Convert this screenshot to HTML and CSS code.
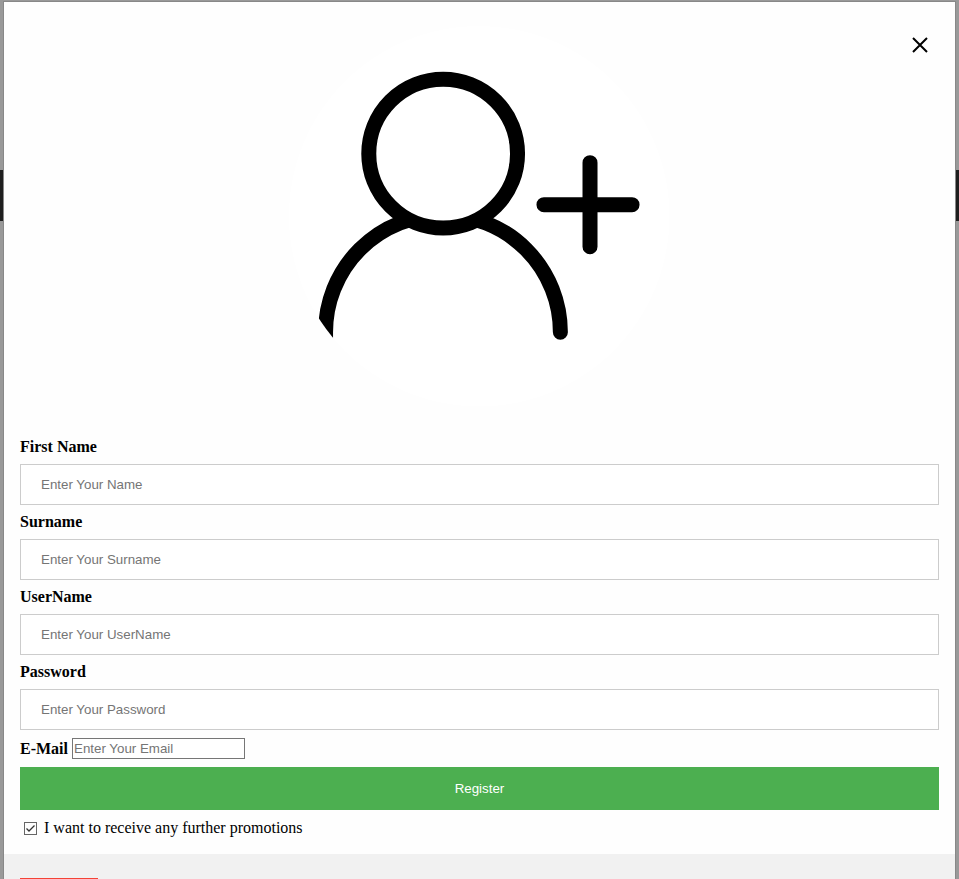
FILE: index.html
```html
<!DOCTYPE html>
<html lang="en">
<head>
<meta charset="utf-8">
<title>Register</title>
<link rel="stylesheet" href="styles.css">
</head>
<body>
<div class="page-nav"></div>
<div class="modal">
  <form class="modal-content">
    <div class="imgcontainer">
      <button type="button" class="close" aria-label="Close">
        <svg viewBox="0 0 16 16" width="16" height="16"><path d="M1 1L15 15M15 1L1 15"/></svg>
      </button>
      <svg class="avatar" viewBox="0 0 380 380" aria-hidden="true">
        <defs><clipPath id="round"><circle cx="190" cy="190" r="190"/></clipPath></defs>
        <g clip-path="url(#round)">
          <rect class="disc" width="380" height="380"/>
          <path d="M36.5 320v-14a117.3 117.3 0 0 1 234.6 0"/>
          <circle class="head" cx="154" cy="127.5" r="74.3"/>
          <path d="M300.7 136.5v84M254.7 178.5h88"/>
        </g>
      </svg>
    </div>
    <div class="container">
      <label for="first"><b>First Name</b></label>
      <input class="field" id="first" type="text" placeholder="Enter Your Name">
      <label for="surname"><b>Surname</b></label>
      <input class="field" id="surname" type="text" placeholder="Enter Your Surname">
      <label for="username"><b>UserName</b></label>
      <input class="field" id="username" type="text" placeholder="Enter Your UserName">
      <label for="password"><b>Password</b></label>
      <input class="field" id="password" type="password" placeholder="Enter Your Password">
      <div class="email-row">
        <label for="email"><b>E-Mail</b></label>
        <input class="email" id="email" type="email" placeholder="Enter Your Email">
      </div>
      <button type="submit" class="register">Register</button>
      <div class="promo">
        <input class="tick" id="promo" type="checkbox" checked>
        <label for="promo">I want to receive any further promotions</label>
      </div>
    </div>
    <div class="footer">
      <button type="button" class="cancel">Cancel</button>
    </div>
  </form>
</div>
</body>
</html>
```
FILE: styles.css
```css
* {
  box-sizing: border-box;
}

body {
  margin: 0;
  padding-top: 170px;
  height: 100vh;
  overflow: hidden;
  background: #fff;
  color: #000;
  font: 16px/18px "Liberation Serif", "Times New Roman", serif;
}

.page-nav {
  height: 51px;
  background: #333;
}

.modal {
  position: fixed;
  inset: 0;
  padding: 1px 3px;
  overflow: hidden;
  background: rgba(0, 0, 0, 0.4);
}

.modal-content {
  background: #fefefe;
  border: 1px solid #888;
}

.imgcontainer {
  position: relative;
  margin: 24px 0 12px;
  text-align: center;
}

.avatar {
  display: block;
  width: 40%;
  margin: 0 auto;
  padding-bottom: 4px;
  box-sizing: content-box;
  fill: none;
  stroke: #000;
  stroke-width: 15;
  stroke-linecap: round;
}

.disc,
.head {
  fill: #fff;
}

.disc {
  stroke: none;
}

.close {
  position: absolute;
  top: 11px;
  right: 27px;
  padding: 0;
  border: 0;
  background: none;
  cursor: pointer;
}

.close svg {
  display: block;
  fill: none;
  stroke: #000;
  stroke-width: 2;
}

.container {
  padding: 16px;
}

.container > label {
  display: block;
}

input,
button {
  font: 13.3333px/15px "Liberation Sans", Arial, sans-serif;
}

input::placeholder {
  color: #757575;
}

.field {
  display: block;
  width: 100%;
  height: 41px;
  margin: 8px 0;
  padding: 12px 20px;
  border: 1px solid #ccc;
  background: #fff;
}

.email-row {
  display: flex;
  align-items: center;
  gap: 4px;
}

.email {
  width: 173px;
  height: 21px;
  padding: 1px;
  border: 1px solid #767676;
  background: #fff;
}

.register {
  display: block;
  width: 100%;
  margin: 8px 0;
  padding: 14px 20px;
  border: 0;
  background: #4caf50;
  color: #fff;
}

.promo {
  display: flex;
  align-items: center;
  height: 20px;
}

.tick {
  appearance: none;
  width: 13px;
  height: 13px;
  margin: 0 7px 0 4px;
  border: 1px solid #666;
  background: #fff;
}

.tick:checked {
  background: url("data:image/svg+xml,%3Csvg xmlns='http://www.w3.org/2000/svg' viewBox='0 0 11 11'%3E%3Cpath d='M1.5 5.5L4 8L9.5 2.5' fill='none' stroke='%23333' stroke-width='1.3'/%3E%3C/svg%3E") center / 11px no-repeat;
}

.footer {
  padding: 16px;
  background: #f1f1f1;
}

.cancel {
  margin: 8px 0;
  padding: 10px 18px;
  border: 0;
  background: #f44336;
  color: #fff;
}
```
